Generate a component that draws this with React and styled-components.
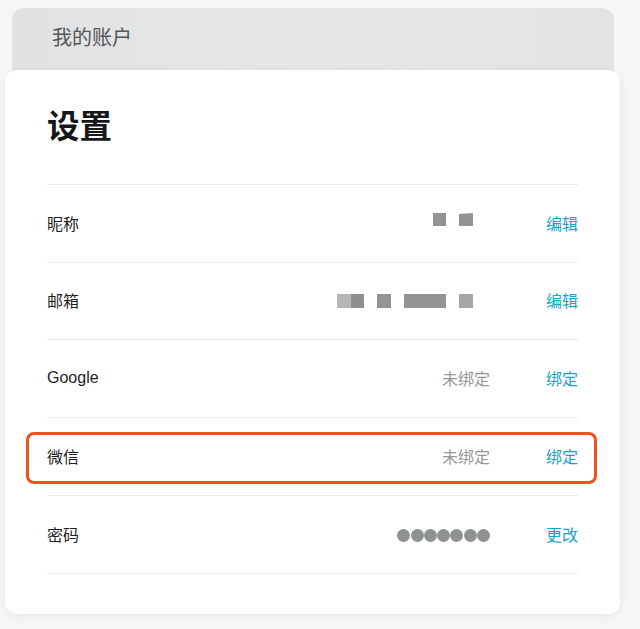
import React from "react";
import styled, { createGlobalStyle } from "styled-components";

const Global = createGlobalStyle`
  html, body { margin: 0; padding: 0; background: #f5f6f7; }
  body { font-family: "Liberation Sans", "Noto Sans CJK SC", sans-serif; }
`;

const Page = styled.div`
  width: 640px;
  height: 629px;
  padding-top: 8px;
  box-sizing: border-box;
  display: flex;
  flex-direction: column;
`;

const AccountTab = styled.div`
  margin: 0 26px 0 12px;
  height: 77px;
  box-sizing: border-box;
  padding: 16px 0 0 40px;
  border-radius: 12px 12px 0 0;
  background: linear-gradient(90deg, #e1e2e3 0%, #e6e7e7 50%, #e2e3e4 100%);
  font-size: 20px;
  line-height: 29px;
  color: #555758;
`;

const Card = styled.div`
  position: relative;
  margin: -15px 20px 0 5px;
  height: 544px;
  box-sizing: border-box;
  background: #fff;
  border-radius: 12px;
  box-shadow: 0 2px 10px rgba(0, 0, 0, 0.07);
  padding: 35px 42px 0 42px;
`;

const Title = styled.h1`
  margin: 0 0 35px 0;
  font-size: 32.5px;
  line-height: 44px;
  font-weight: 700;
  color: #161718;
`;

const List = styled.div`
  border-bottom: 1px solid #ececec;
`;

const Row = styled.div`
  position: relative;
  display: flex;
  align-items: center;
  height: 78px;
  padding-bottom: 2px;
  box-sizing: border-box;
  border-top: 1px solid #ececec;
  &:nth-child(2) { height: 77px; }
`;

const Label = styled.span`
  flex: 1;
  font-size: 16px;
  color: #1e1e1e;
`;

const Value = styled.span`
  display: flex;
  align-items: center;
  font-size: 16px;
  color: #979899;
`;

const Action = styled.a`
  margin-left: 56px;
  width: 32px;
  text-align: right;
  font-size: 16px;
  color: #1aa2c8;
  cursor: pointer;
`;

const Masked = styled.span`
  display: flex;
  align-items: center;
  gap: ${(p) => p.$gap}px;
  margin-right: 17px;
  margin-top: ${(p) => p.$offset}px;
`;

const Block = styled.span`
  display: block;
  width: ${(p) => p.$w}px;
  height: ${(p) => p.$h}px;
  background: ${(p) => p.$bg || "#929393"};
  clip-path: ${(p) => (p.$slant ? "polygon(0 8%, 100% 0, 100% 100%, 0 100%)" : "none")};
`;

const Pair = styled.span`
  display: flex;
`;

const Dots = styled.span`
  display: flex;
  gap: 0.3px;
  margin-top: 3px;
`;

const Dot = styled.span`
  width: 13px;
  height: 13px;
  border-radius: 50%;
  background: #8f9293;
`;

const Highlight = styled.div`
  position: absolute;
  left: -21px;
  right: -19px;
  top: 14px;
  height: 52px;
  box-sizing: border-box;
  border: 3px solid #f2501c;
  border-radius: 8px;
  pointer-events: none;
`;

export default function App() {
  return (
    <>
      <Global />
      <Page>
        <AccountTab>我的账户</AccountTab>
        <Card>
          <Title>设置</Title>
          <List>
            <Row>
              <Label>昵称</Label>
              <Value>
                <Masked $gap={13} $offset={-6}>
                  <Block $w={13} $h={13} />
                  <Block $w={14} $h={13} $slant />
                </Masked>
              </Value>
              <Action>编辑</Action>
            </Row>
            <Row>
              <Label>邮箱</Label>
              <Value>
                <Masked $gap={13} $offset={2}>
                  <Pair>
                    <Block $w={14} $h={14} $bg="#b5b6b6" />
                    <Block $w={13} $h={14} $bg="#8e8f8f" />
                  </Pair>
                  <Block $w={14} $h={14} />
                  <Block $w={42} $h={14} $bg="#939494" />
                  <Block $w={14} $h={14} $bg="#a5a6a6" />
                </Masked>
              </Value>
              <Action>编辑</Action>
            </Row>
            <Row>
              <Label>Google</Label>
              <Value>未绑定</Value>
              <Action>绑定</Action>
            </Row>
            <Row>
              <Label>微信</Label>
              <Value>未绑定</Value>
              <Action>绑定</Action>
              <Highlight />
            </Row>
            <Row>
              <Label>密码</Label>
              <Value>
                <Dots>
                  {Array.from({ length: 7 }).map((_, i) => (
                    <Dot key={i} />
                  ))}
                </Dots>
              </Value>
              <Action>更改</Action>
            </Row>
          </List>
        </Card>
      </Page>
    </>
  );
}
